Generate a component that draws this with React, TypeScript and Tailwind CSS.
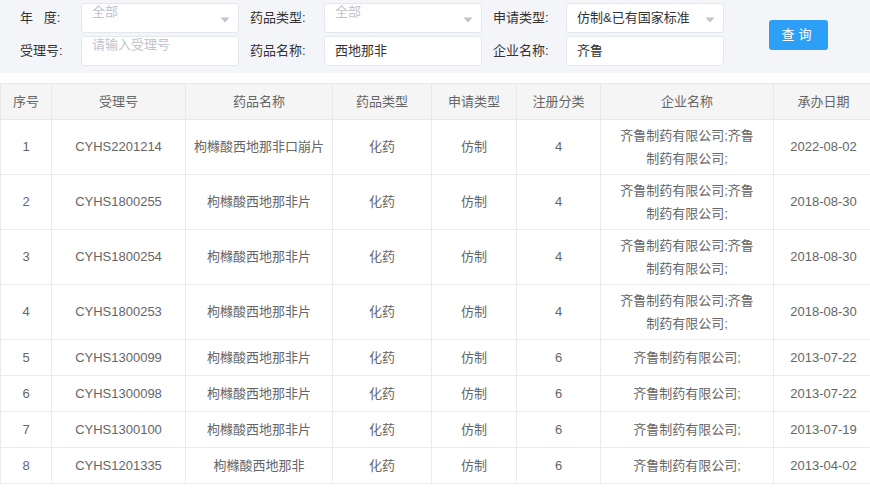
import React from "react";

const font = { fontFamily: '"Liberation Sans", "Noto Sans CJK SC", sans-serif' };

type Row = {
  no: number;
  code: string;
  name: string;
  type: string;
  apply: string;
  cls: string;
  company: string;
  date: string;
};

const rows: Row[] = [
  { no: 1, code: "CYHS2201214", name: "枸橼酸西地那非口崩片", type: "化药", apply: "仿制", cls: "4", company: "齐鲁制药有限公司;齐鲁制药有限公司;", date: "2022-08-02" },
  { no: 2, code: "CYHS1800255", name: "枸橼酸西地那非片", type: "化药", apply: "仿制", cls: "4", company: "齐鲁制药有限公司;齐鲁制药有限公司;", date: "2018-08-30" },
  { no: 3, code: "CYHS1800254", name: "枸橼酸西地那非片", type: "化药", apply: "仿制", cls: "4", company: "齐鲁制药有限公司;齐鲁制药有限公司;", date: "2018-08-30" },
  { no: 4, code: "CYHS1800253", name: "枸橼酸西地那非片", type: "化药", apply: "仿制", cls: "4", company: "齐鲁制药有限公司;齐鲁制药有限公司;", date: "2018-08-30" },
  { no: 5, code: "CYHS1300099", name: "枸橼酸西地那非片", type: "化药", apply: "仿制", cls: "6", company: "齐鲁制药有限公司;", date: "2013-07-22" },
  { no: 6, code: "CYHS1300098", name: "枸橼酸西地那非片", type: "化药", apply: "仿制", cls: "6", company: "齐鲁制药有限公司;", date: "2013-07-22" },
  { no: 7, code: "CYHS1300100", name: "枸橼酸西地那非片", type: "化药", apply: "仿制", cls: "6", company: "齐鲁制药有限公司;", date: "2013-07-19" },
  { no: 8, code: "CYHS1201335", name: "枸橼酸西地那非", type: "化药", apply: "仿制", cls: "6", company: "齐鲁制药有限公司;", date: "2013-04-02" },
];

const headers = ["序号", "受理号", "药品名称", "药品类型", "申请类型", "注册分类", "企业名称", "承办日期"];
const widths = [51, 134, 147, 99, 85, 84, 173, 100];

function Arrow() {
  return (
    <svg width="10" height="6" viewBox="0 0 10 6" className="absolute right-[8px] top-[13px]">
      <path d="M0.5 0.5 L9.5 0.5 L5 5.5 Z" fill="#c0c4cc" />
    </svg>
  );
}

function Label({ children, w }: { children: React.ReactNode; w: string }) {
  return <div className={`${w} shrink-0 text-[13px] text-[#333]`}>{children}</div>;
}

function SelectBox({ value, placeholder }: { value?: string; placeholder?: string }) {
  return (
    <div className="relative h-[30px] w-[158px] shrink-0 rounded-[3px] border border-[#e4e7ed] bg-white">
      {value ? (
        <div className="pl-[10px] text-[13px] leading-[28px] text-[#333]">{value}</div>
      ) : (
        <div className="pl-[10px] text-[13px] leading-[16px] text-[#c0c4cc]">{placeholder}</div>
      )}
      <Arrow />
    </div>
  );
}

function InputBox({ value, placeholder }: { value?: string; placeholder?: string }) {
  return (
    <div className="h-[30px] w-[158px] shrink-0 rounded-[3px] border border-[#e4e7ed] bg-white">
      {value ? (
        <div className="pl-[10px] text-[13px] leading-[28px] text-[#333]">{value}</div>
      ) : (
        <div className="pl-[10px] text-[13px] leading-[16px] text-[#c0c4cc]">{placeholder}</div>
      )}
    </div>
  );
}

export default function App() {
  return (
    <div className="h-[492px] w-[870px] overflow-hidden bg-white" style={font}>
      <div className="flex h-[73px] items-start bg-[#f4f5f9] pt-[3px]">
        <div className="flex flex-col gap-[3px]">
          <div className="flex items-center pl-[20px]">
            <Label w="w-[61px]">年&nbsp;&nbsp;&nbsp;度:</Label>
            <SelectBox placeholder="全部" />
            <div className="ml-[11px]" />
            <Label w="w-[74px]">药品类型:</Label>
            <SelectBox placeholder="全部" />
            <div className="ml-[11px]" />
            <Label w="w-[73px]">申请类型:</Label>
            <div className="w-[159px]">
              <SelectBox value="仿制&已有国家标准" />
            </div>
          </div>
          <div className="flex items-center pl-[20px]">
            <Label w="w-[61px]">受理号:</Label>
            <InputBox placeholder="请输入受理号" />
            <div className="ml-[11px]" />
            <Label w="w-[74px]">药品名称:</Label>
            <InputBox value="西地那非" />
            <div className="ml-[11px]" />
            <Label w="w-[73px]">企业名称:</Label>
            <InputBox value="齐鲁" />
          </div>
        </div>
        <button className="ml-[44px] mt-[17px] h-[30px] w-[59px] rounded-[3px] bg-[#2d9ff7] text-[13px] tracking-[4px] text-white">
          查询
        </button>
      </div>

      <table className="mt-[10px] table-fixed border-collapse text-[13px] text-[#666]" style={{ width: 873 }}>
        <colgroup>
          {widths.map((w, i) => (
            <col key={i} style={{ width: w }} />
          ))}
        </colgroup>
        <thead>
          <tr className="h-[36px] bg-[#f5f5f5]">
            {headers.map((h) => (
              <th key={h} className="border border-[#e8e8e8] font-normal">
                {h}
              </th>
            ))}
          </tr>
        </thead>
        <tbody>
          {rows.map((r) => {
            const tall = r.company.length > 10;
            return (
              <tr key={r.no} className={tall ? "h-[55px]" : "h-[36px]"}>
                <td className="border border-[#ebebeb] text-center">{r.no}</td>
                <td className="border border-[#ebebeb] text-center">{r.code}</td>
                <td className="border border-[#ebebeb] text-center">{r.name}</td>
                <td className="border border-[#ebebeb] text-center">{r.type}</td>
                <td className="border border-[#ebebeb] text-center">{r.apply}</td>
                <td className="border border-[#ebebeb] text-center">{r.cls}</td>
                <td className="border border-[#ebebeb] px-[14px] text-center leading-[23px]">{r.company}</td>
                <td className="border border-[#ebebeb] text-center">{r.date}</td>
              </tr>
            );
          })}
        </tbody>
      </table>
    </div>
  );
}
